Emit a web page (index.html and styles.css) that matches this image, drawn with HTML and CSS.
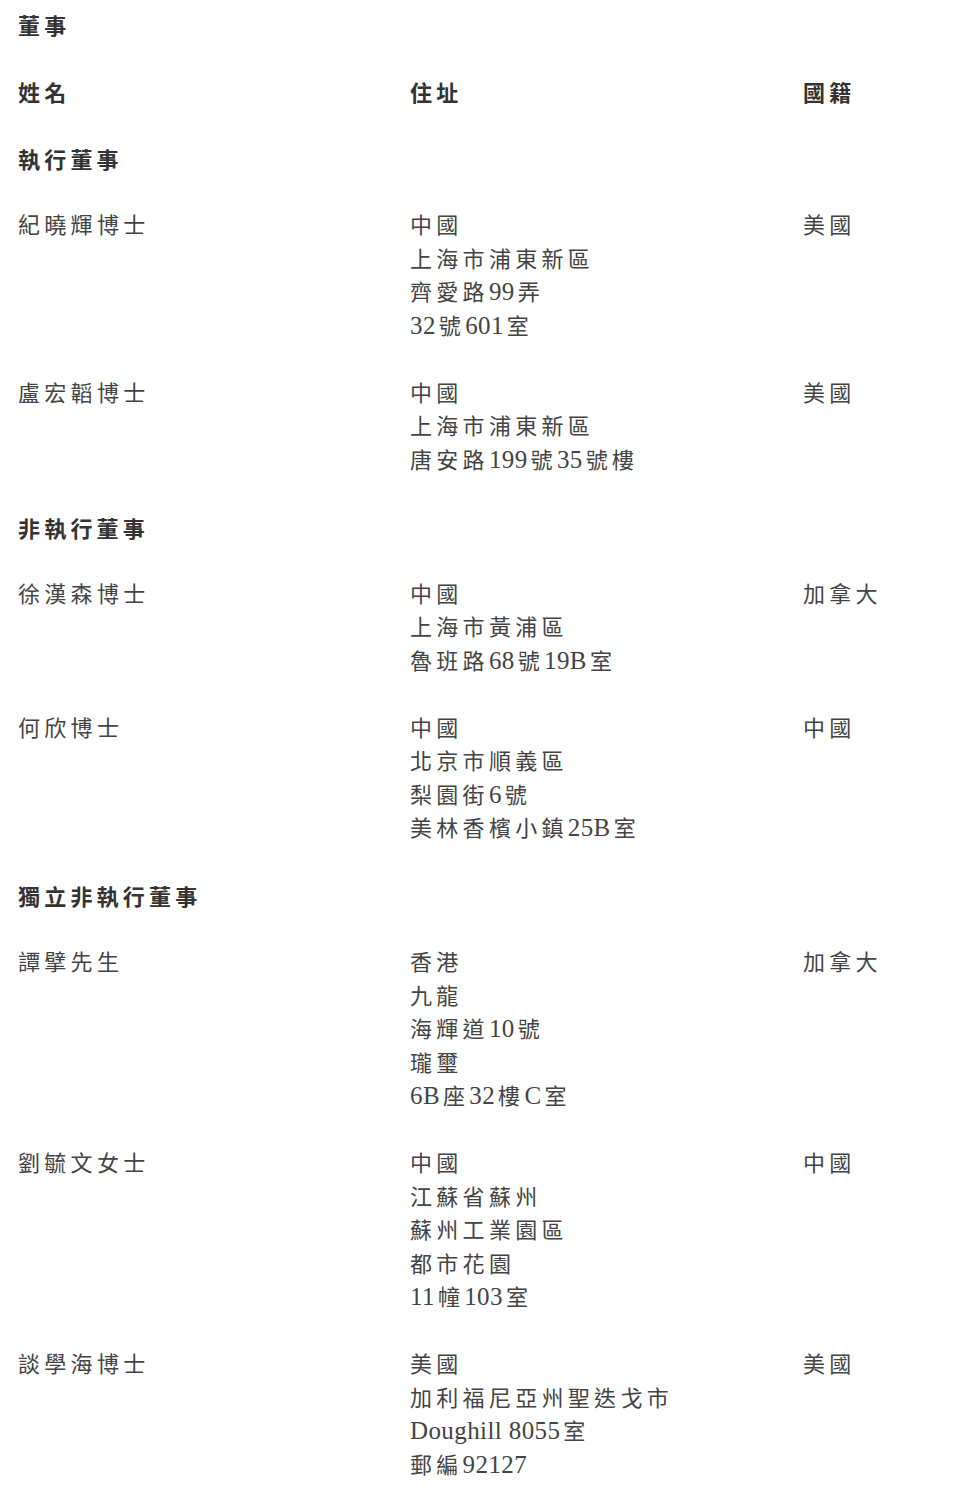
FILE: index.html
```html
<!DOCTYPE html>
<html lang="zh-Hant">
<head>
<meta charset="utf-8">
<link rel="stylesheet" href="styles.css">
</head>
<body>
<div class="page">
  <div class="heading">董事</div>
  <div class="row heading">
    <div>姓名</div><div>住址</div><div>國籍</div>
  </div>
  <div class="heading">執行董事</div>
  <div class="row">
    <div>紀曉輝博士</div>
    <div><div>中國</div><div>上海市浦東新區</div><div>齊愛路<span class="lat">99</span>弄</div><div><span class="lat">32</span>號<span class="lat">601</span>室</div></div>
    <div>美國</div>
  </div>
  <div class="row">
    <div>盧宏韜博士</div>
    <div><div>中國</div><div>上海市浦東新區</div><div>唐安路<span class="lat">199</span>號<span class="lat">35</span>號樓</div></div>
    <div>美國</div>
  </div>
  <div class="heading">非執行董事</div>
  <div class="row">
    <div>徐漢森博士</div>
    <div><div>中國</div><div>上海市黃浦區</div><div>魯班路<span class="lat">68</span>號<span class="lat">19B</span>室</div></div>
    <div>加拿大</div>
  </div>
  <div class="row">
    <div>何欣博士</div>
    <div><div>中國</div><div>北京市順義區</div><div>梨園街<span class="lat">6</span>號</div><div>美林香檳小鎮<span class="lat">25B</span>室</div></div>
    <div>中國</div>
  </div>
  <div class="heading">獨立非執行董事</div>
  <div class="row">
    <div>譚擘先生</div>
    <div><div>香港</div><div>九龍</div><div>海輝道<span class="lat">10</span>號</div><div>瓏璽</div><div><span class="lat">6B</span>座<span class="lat">32</span>樓<span class="lat">C</span>室</div></div>
    <div>加拿大</div>
  </div>
  <div class="row">
    <div>劉毓文女士</div>
    <div><div>中國</div><div>江蘇省蘇州</div><div>蘇州工業園區</div><div>都市花園</div><div><span class="lat">11</span>幢<span class="lat">103</span>室</div></div>
    <div>中國</div>
  </div>
  <div class="row">
    <div>談學海博士</div>
    <div><div>美國</div><div>加利福尼亞州聖迭戈市</div><div><span class="lat">Doughill 8055</span>室</div><div>郵編<span class="lat">92127</span></div></div>
    <div>美國</div>
  </div>
</div>
</body>
</html>
```

FILE: styles.css
```css
html, body {
  background: #ffffff;
}
body {
  margin: 8px;
}
.page {
  padding-left: 10px;
  display: flex;
  flex-direction: column;
  gap: 33.5px;
  font-family: "Liberation Serif", "Noto Sans CJK TC", serif;
  font-size: 22px;
  line-height: 33.5px;
  letter-spacing: 4.3px;
  color: #444444;
}
.lat {
  font-size: 25px;
  line-height: 1;
  letter-spacing: 0.4px;
  margin-right: 3px;
}
.heading {
  font-family: "Noto Sans CJK TC", sans-serif;
  font-weight: 700;
  color: #333333;
  letter-spacing: 4.2px;
}
.row {
  display: grid;
  grid-template-columns: 392px 393px 1fr;
}
```
